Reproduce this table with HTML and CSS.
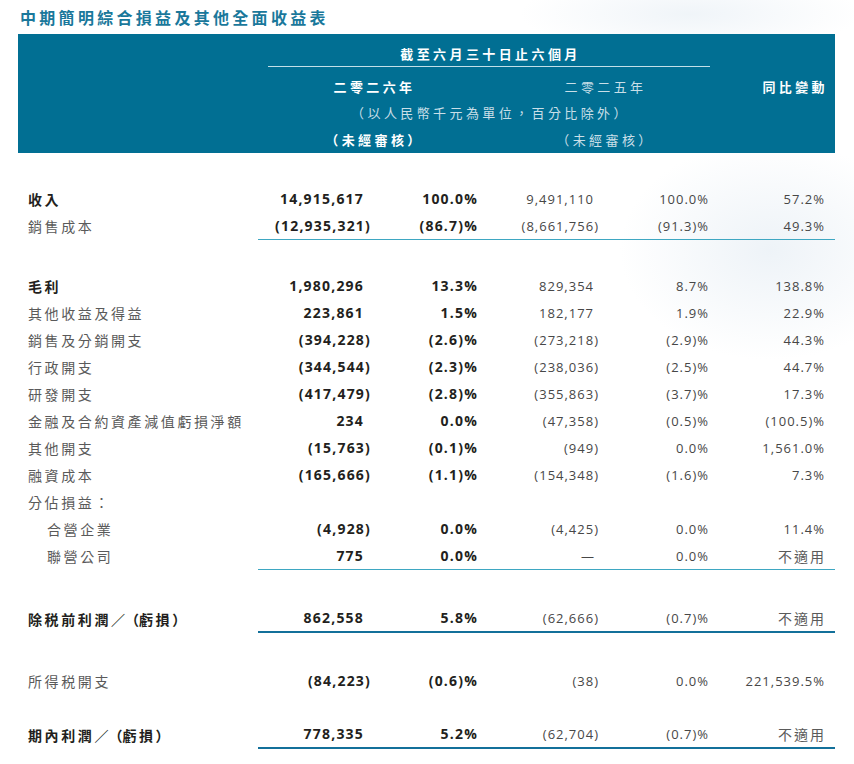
FILE: index.html
```html
<!DOCTYPE html>
<html lang="zh-Hant">
<head>
<meta charset="utf-8">
<title>中期簡明綜合損益及其他全面收益表</title>
<link rel="stylesheet" href="styles.css">
</head>
<body>
<h1 class="title">中期簡明綜合損益及其他全面收益表</h1>
<table class="stmt">
  <colgroup>
    <col class="w-label"><col class="w-c"><col class="w-c"><col class="w-c"><col class="w-c4"><col class="w-c">
  </colgroup>
  <thead>
    <tr>
      <th></th>
      <th colspan="4" class="period-cell"><div class="period">截至六月三十日止六個月</div></th>
      <th></th>
    </tr>
    <tr class="h-years">
      <th></th>
      <th colspan="2" class="hc strong">二零二六年</th>
      <th colspan="2" class="hc light">二零二五年</th>
      <th class="hr strong">同比變動</th>
    </tr>
    <tr class="h-unit">
      <th></th>
      <th colspan="4" class="hc light">（以人民幣千元為單位，百分比除外）</th>
      <th></th>
    </tr>
    <tr class="h-audit">
      <th></th>
      <th colspan="2" class="hc strong">（未經審核）</th>
      <th colspan="2" class="hc light">（未經審核）</th>
      <th></th>
    </tr>
  </thead>
  <tbody>
    <tr class="gap g32"><td colspan="6"></td></tr>
    <tr class="main">
      <td class="lbl">收入</td><td class="a p">14,915,617</td><td class="b">100.0%</td><td class="c p">9,491,110</td><td class="d">100.0%</td><td class="e">57.2%</td>
    </tr>
    <tr class="thin">
      <td class="lbl">銷售成本</td><td class="a">(12,935,321)</td><td class="b">(86.7)%</td><td class="c">(8,661,756)</td><td class="d">(91.3)%</td><td class="e">49.3%</td>
    </tr>
    <tr class="gap g32"><td colspan="6"></td></tr>
    <tr class="main">
      <td class="lbl">毛利</td><td class="a p">1,980,296</td><td class="b">13.3%</td><td class="c p">829,354</td><td class="d">8.7%</td><td class="e">138.8%</td>
    </tr>
    <tr>
      <td class="lbl">其他收益及得益</td><td class="a p">223,861</td><td class="b">1.5%</td><td class="c p">182,177</td><td class="d">1.9%</td><td class="e">22.9%</td>
    </tr>
    <tr>
      <td class="lbl">銷售及分銷開支</td><td class="a">(394,228)</td><td class="b">(2.6)%</td><td class="c">(273,218)</td><td class="d">(2.9)%</td><td class="e">44.3%</td>
    </tr>
    <tr>
      <td class="lbl">行政開支</td><td class="a">(344,544)</td><td class="b">(2.3)%</td><td class="c">(238,036)</td><td class="d">(2.5)%</td><td class="e">44.7%</td>
    </tr>
    <tr>
      <td class="lbl">研發開支</td><td class="a">(417,479)</td><td class="b">(2.8)%</td><td class="c">(355,863)</td><td class="d">(3.7)%</td><td class="e">17.3%</td>
    </tr>
    <tr>
      <td class="lbl">金融及合約資產減值虧損淨額</td><td class="a p">234</td><td class="b">0.0%</td><td class="c">(47,358)</td><td class="d">(0.5)%</td><td class="e">(100.5)%</td>
    </tr>
    <tr>
      <td class="lbl">其他開支</td><td class="a">(15,763)</td><td class="b">(0.1)%</td><td class="c">(949)</td><td class="d">0.0%</td><td class="e">1,561.0%</td>
    </tr>
    <tr>
      <td class="lbl">融資成本</td><td class="a">(165,666)</td><td class="b">(1.1)%</td><td class="c">(154,348)</td><td class="d">(1.6)%</td><td class="e">7.3%</td>
    </tr>
    <tr>
      <td class="lbl">分佔損益：</td><td></td><td></td><td></td><td></td><td></td>
    </tr>
    <tr>
      <td class="lbl sub">合營企業</td><td class="a">(4,928)</td><td class="b">0.0%</td><td class="c">(4,425)</td><td class="d">0.0%</td><td class="e">11.4%</td>
    </tr>
    <tr class="thin">
      <td class="lbl sub">聯營公司</td><td class="a p">775</td><td class="b">0.0%</td><td class="c p dash">—</td><td class="d">0.0%</td><td class="e na">不適用</td>
    </tr>
    <tr class="gap g34"><td colspan="6"></td></tr>
    <tr class="main thick">
      <td class="lbl">除税前利潤<span class="tight">／（</span>虧損）</td><td class="a p">862,558</td><td class="b">5.8%</td><td class="c">(62,666)</td><td class="d">(0.7)%</td><td class="e na">不適用</td>
    </tr>
    <tr class="gap g34"><td colspan="6"></td></tr>
    <tr>
      <td class="lbl">所得税開支</td><td class="a">(84,223)</td><td class="b">(0.6)%</td><td class="c">(38)</td><td class="d">0.0%</td><td class="e">221,539.5%</td>
    </tr>
    <tr class="gap g26"><td colspan="6"></td></tr>
    <tr class="main thick">
      <td class="lbl">期內利潤<span class="tight">／（</span>虧損）</td><td class="a p">778,335</td><td class="b">5.2%</td><td class="c">(62,704)</td><td class="d">(0.7)%</td><td class="e na">不適用</td>
    </tr>
  </tbody>
</table>
</body>
</html>
```

FILE: styles.css
```css
html, body {
  margin: 0;
  padding: 0;
}

body {
  width: 854px;
  height: 764px;
  overflow: hidden;
  background:
    radial-gradient(ellipse 150px 110px at 770px 250px, rgba(232, 239, 245, 0.75), rgba(255, 255, 255, 0) 100%),
    radial-gradient(ellipse 170px 40px at 690px 14px, rgba(236, 242, 247, 0.8), rgba(255, 255, 255, 0) 100%),
    #ffffff;
  font-family: "Open Sans", "Noto Sans CJK TC", sans-serif;
  color: #4a4a4a;
}

.title {
  margin: 0;
  padding-left: 20px;
  height: 34px;
  line-height: 34px;
  font-family: "Noto Sans CJK TC", sans-serif;
  font-size: 16px;
  font-weight: 700;
  letter-spacing: 3.3px;
  color: #1a789b;
}

.stmt {
  margin-left: 18px;
  width: 817px;
  table-layout: fixed;
  border-collapse: separate;
  border-spacing: 0;
}

.w-label { width: 240px; }
.w-c { width: 115px; }
.w-c4 { width: 117px; }

/* ---------- header band ---------- */
.stmt thead th {
  background: #016f93;
  padding: 0;
  font-family: "Noto Sans CJK TC", sans-serif;
  font-size: 13px;
  letter-spacing: 3.4px;
  font-weight: 700;
  color: #ffffff;
  white-space: nowrap;
}

.stmt thead .period-cell {
  padding: 0 10px;
}

.period {
  padding-top: 10px;
  padding-bottom: 2px;
  line-height: 20px;
  text-align: center;
  padding-left: 3px;
  border-bottom: 1px solid rgba(215, 235, 242, 0.9);
}

.stmt thead .h-years th {
  padding-top: 10px;
  padding-bottom: 3px;
  line-height: 20px;
}

.stmt thead .h-unit th {
  line-height: 26px;
}

.stmt thead .h-audit th {
  line-height: 27px;
}

.stmt thead th.hc {
  text-align: center;
  padding-left: 3px;
}

.stmt thead th.hr {
  text-align: right;
  padding-right: 7px;
}

.stmt thead th.light {
  font-weight: 400;
  color: #c9dfe8;
}

/* ---------- body rows ---------- */
.stmt tbody td {
  height: 27px;
  padding: 0;
  font-size: 13px;
  letter-spacing: 1px;
  white-space: nowrap;
  text-align: right;
  vertical-align: middle;
  color: #474747;
}

.stmt tbody tr.g32 td { height: 32px; }
.stmt tbody tr.g34 td { height: 34px; }
.stmt tbody tr.g26 td { height: 26px; }

.stmt tbody td.lbl {
  text-align: left;
  padding-left: 10px;
  font-family: "Noto Sans CJK TC", sans-serif;
  font-size: 14px;
  letter-spacing: 2.6px;
  color: #5a5a5a;
}

.stmt tbody td.lbl.sub {
  padding-left: 29px;
}

.stmt tbody tr.main td.lbl {
  font-weight: 700;
  color: #231f20;
}

.tight {
  letter-spacing: 0;
}

.stmt tbody td.a,
.stmt tbody td.b {
  font-weight: 700;
  font-size: 14px;
  color: #231f20;
  letter-spacing: 1.2px;
}

.stmt tbody td.a { padding-right: 2px; }
.stmt tbody td.a.p { padding-right: 9px; }
.stmt tbody td.b { padding-right: 10px; }
.stmt tbody td.c { padding-right: 4px; }
.stmt tbody td.c.p { padding-right: 9px; }
.stmt tbody td.d { padding-right: 11px; }
.stmt tbody td.e { padding-right: 10px; }

.stmt tbody td.dash {
  padding-right: 8px;
  letter-spacing: 0;
}

.stmt tbody td.na {
  font-family: "Noto Sans CJK TC", sans-serif;
  font-size: 14px;
  letter-spacing: 2px;
  color: #5a5a5a;
  padding-right: 9px;
}

.stmt tbody tr.thin td:not(.lbl) {
  border-bottom: 1px solid #3ea7c2;
}

.stmt tbody tr.thick td:not(.lbl) {
  border-bottom: 2px solid #13709a;
}
```
